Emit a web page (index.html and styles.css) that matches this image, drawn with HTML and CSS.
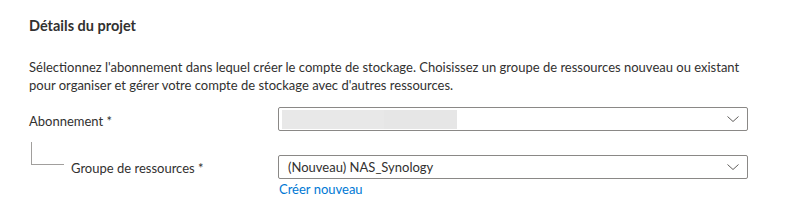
FILE: index.html
```html
<!DOCTYPE html>
<html lang="fr">
<head>
<meta charset="utf-8">
<link rel="stylesheet" href="styles.css">
</head>
<body>
<section class="panel">
  <h2 class="title">Détails du projet</h2>
  <p class="desc">Sélectionnez l'abonnement dans lequel créer le compte de stockage. Choisissez un groupe de ressources nouveau ou existant pour organiser et gérer votre compte de stockage avec d'autres ressources.</p>
  <div class="row row-sub">
    <label class="label">Abonnement <span class="req">*</span></label>
    <div class="field">
      <div class="select">
        <div class="redact"><span class="r1"></span><span class="r2"></span></div>
        <svg class="chev" width="12" height="6" viewBox="0 0 12 6"><path d="M0.5 0.5 L6 5.5 L11.5 0.5" fill="none" stroke="#605e5c" stroke-width="1"/></svg>
      </div>
    </div>
  </div>
  <div class="row row-rg">
    <div class="tree"></div>
    <label class="label label-rg">Groupe de ressources <span class="req">*</span></label>
    <div class="field">
      <div class="select">
        <span class="value">(Nouveau) NAS_Synology</span>
        <svg class="chev" width="12" height="6" viewBox="0 0 12 6"><path d="M0.5 0.5 L6 5.5 L11.5 0.5" fill="none" stroke="#605e5c" stroke-width="1"/></svg>
      </div>
      <a class="link" href="#">Créer nouveau</a>
    </div>
  </div>
</section>
</body>
</html>
```
FILE: styles.css
```css
html, body { margin: 0; padding: 0; background: #fff; }
body {
  font-family: "Lato", "Open Sans", sans-serif;
  font-size: 13px;
  color: #323130;
}
.panel { padding: 16px 0 0 29px; width: 719px; }
.title {
  margin: 0;
  font-size: 14.5px;
  font-weight: 700;
  line-height: 20px;
  color: #323130;
}
.desc {
  margin: 22px 0 0 0;
  line-height: 18px;
}
.row { display: flex; align-items: flex-start; position: relative; }
.row-sub { margin-top: 13px; }
.row-rg { margin-top: 22px; }
.label { width: 249px; flex: none; line-height: 24px; padding-top: 2px; }
.label-rg { width: 207px; margin-left: 42px; padding-top: 1px; }
.tree {
  position: absolute;
  left: 2px; top: -13px;
  width: 32px; height: 22px;
  border-left: 1px solid #a19f9d;
  border-bottom: 1px solid #a19f9d;
}
.field { width: 470px; }
.select {
  height: 22px;
  border: 1px solid #8a8886;
  border-radius: 2px;
  display: flex;
  align-items: center;
  padding: 0 8px 0 3px;
  position: relative;
}
.redact { display: flex; height: 19px; flex: none; }
.redact .r1 { width: 102px; background: #e8e8e8; }
.redact .r2 { width: 73px; background: #e6e6e6; }
.value { padding-left: 6px; flex: 1; }
.chev { margin-left: auto; flex: none; }
.link {
  display: block;
  color: #0078d4;
  text-decoration: none;
  line-height: 18px;
  margin-top: 1px;
  margin-left: 1px;
}
```
